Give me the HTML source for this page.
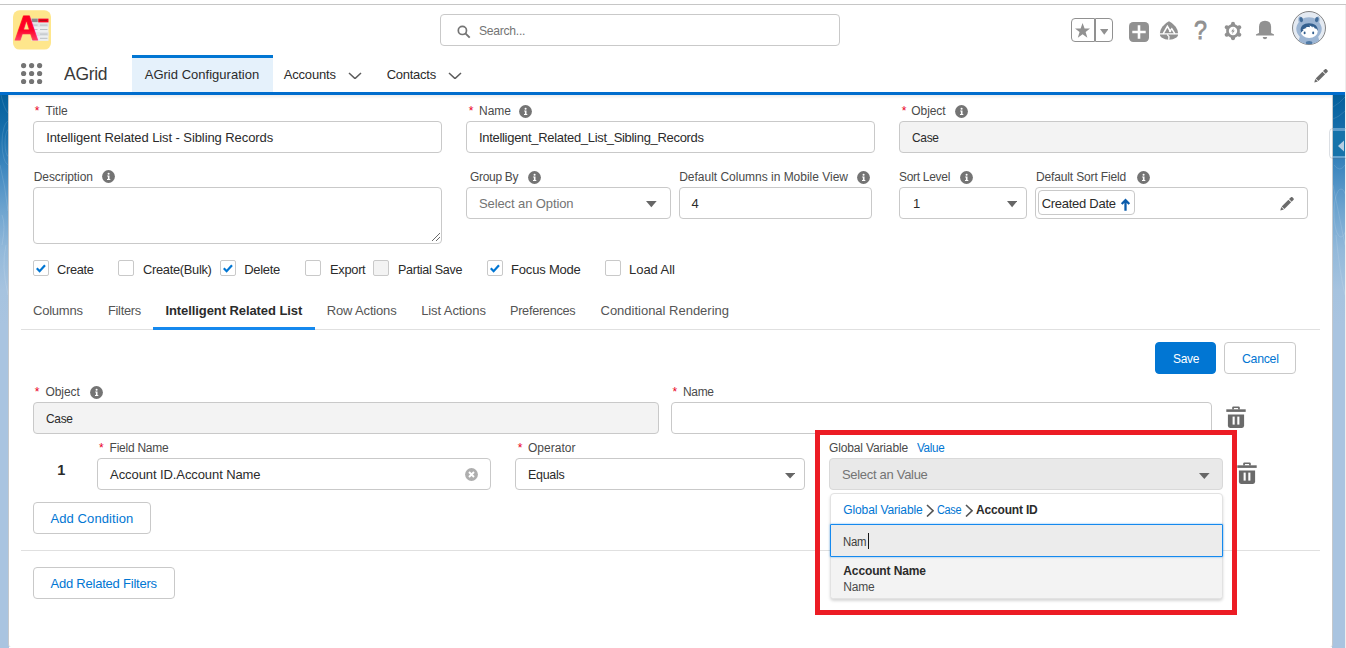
<!DOCTYPE html>
<html lang="en"><head><meta charset="utf-8"><title>AGrid Configuration</title>
<style>
html,body{margin:0;padding:0}
body{width:1346px;height:648px;overflow:hidden;position:relative;background:#fff;font-family:"Liberation Sans",sans-serif}
.b{position:absolute;display:block}
div.b{box-sizing:content-box}
.t{position:absolute;white-space:pre;line-height:1}
</style></head>
<body>
<div class="b" style="left:0px;top:4px;width:1346px;height:1px;background:#c6c6c6;"></div>
<div class="b" style="left:1345px;top:5px;width:1px;height:643px;background:#efeded;"></div>
<div class="b" style="left:0px;top:95px;width:9px;height:553px;background:linear-gradient(to bottom,#035f9c 0px,#1a70ac 40px,#4189c0 75px,#6ea4cf 115px,#93b9da 155px,#a6c3df 195px,#a9c4e0 230px,#a9c4e0 100%);"></div>
<div class="b" style="left:1332px;top:95px;width:13px;height:553px;background:linear-gradient(to bottom,#035f9c 0px,#1a70ac 40px,#4189c0 75px,#6ea4cf 115px,#93b9da 155px,#a6c3df 195px,#a9c4e0 230px,#a9c4e0 100%);"></div>
<svg class="b" style="left:0;top:95px" width="8" height="240" viewBox="0 0 8 240"><g fill="none" stroke="#fff" stroke-opacity=".16" stroke-width=".8"><ellipse cx="9" cy="48" rx="7" ry="22"/><ellipse cx="9" cy="48" rx="4" ry="14"/><path d="M1 0q3 14 7 18M0 70q5 20 8 46M2 120q4 10 0 30M6 150q-5 20 2 50"/></g></svg>
<svg class="b" style="left:1333px;top:95px" width="12" height="240" viewBox="0 0 12 240"><g fill="none" stroke="#fff" stroke-opacity=".16" stroke-width=".8"><path d="M0 12q7-4 12-10M0 24q6-2 12-8M1 70q6 8 11 0M0 90q6 30 12 60M3 140q4 40 9 60"/><ellipse cx="8" cy="118" rx="7" ry="24"/></g></svg>
<div class="b" style="left:8px;top:95px;width:1324.5px;height:551.5px;background:#fff;border-left:1px solid #c4c8cc;border-right:1px solid #c4c8cc;border-radius:0 0 3px 3px;box-sizing:border-box;"></div>
<div class="b" style="left:9px;top:95px;width:1323px;height:4px;background:linear-gradient(to bottom,rgba(0,0,0,.07),rgba(0,0,0,0));"></div>
<div class="b" style="left:0px;top:92px;width:1345px;height:3px;background:#016dcd;"></div>
<div class="b" style="left:1329px;top:127.500px;width:20px;height:31px;border:1px solid rgba(90,110,130,.22);border-radius:4px;box-sizing:border-box"></div>
<div class="b" style="left:1333px;top:128px;width:12px;height:30px;background:rgba(120,175,215,.75);"></div>
<div class="b" style="left:1333px;top:130.5px;width:12px;height:25.5px;background:#1673aa;"></div>
<svg class="b" style="left:1337.500px;top:139.500px" width="6.500" height="12" viewBox="0 0 6.500 12"><path d="M6.500 0v12L0 6z" fill="#b4cee2"/></svg>
<svg class="b" style="left:13px;top:10px" width="38" height="40" viewBox="0 0 38 40">
<defs><linearGradient id="ag" x1="0" y1="0" x2="0" y2="1"><stop offset="0" stop-color="#ff0018"/><stop offset=".55" stop-color="#ff0028"/><stop offset="1" stop-color="#ff6a88"/></linearGradient></defs>
<rect x="0" y=".3" width="38" height="39.3" rx="6.5" fill="#fee68c"/>
<rect x="18.5" y="8.6" width="17" height="22.3" fill="#eceef0"/>
<rect x="18.5" y="8.6" width="6.3" height="3.6" fill="#8a8a8a"/><rect x="25.2" y="8.6" width="10.3" height="3.8" fill="#f5001c"/>
<rect x="26.5" y="10" width="7.5" height="1" fill="#a8101c"/>
<rect x="18.5" y="13.2" width="17" height="3.6" fill="#dfe2e5"/><rect x="18.5" y="22.2" width="17" height="3.8" fill="#dfe2e5"/>
<g fill="#b9bec3"><rect x="20" y="14.6" width="4.6" height="1"/><rect x="27" y="14.6" width="7.5" height="1"/><rect x="27" y="19" width="7.5" height="1"/><rect x="27" y="23.6" width="7.5" height="1"/><rect x="27" y="27.8" width="7.5" height="1"/><rect x="21" y="19" width="3.5" height="1"/></g>
<text x="1.6" y="30.3" font-family="Liberation Sans, sans-serif" font-weight="700" font-size="35" fill="url(#ag)" textLength="24" lengthAdjust="spacingAndGlyphs" stroke="url(#ag)" stroke-width="1">A</text>
</svg>
<div class="b" style="left:440px;top:14px;width:398px;height:30px;background:#fff;border:1px solid #c9c9c9;border-radius:4px;"></div>
<svg class="b" style="left:457px;top:25px" width="14" height="14" viewBox="0 0 14 14"><circle cx="5.4" cy="5.4" r="4.1" fill="none" stroke="#747474" stroke-width="1.7"/><path d="M8.4 8.4l4.3 4.3" stroke="#747474" stroke-width="1.9"/></svg>
<div class="b" style="left:1071px;top:18px;width:24px;height:24px;border:1px solid #919191;border-radius:4px 0 0 4px;box-sizing:border-box"></div>
<div class="b" style="left:1095px;top:18px;width:18px;height:24px;border:1px solid #919191;border-radius:0 4px 4px 0;box-sizing:border-box"></div>
<svg class="b" style="left:1075.3px;top:23.3px" width="15.2" height="15.2" viewBox="0 0 20 20"><path d="M10 0l2.6 7.2H20l-6 4.6 2.3 7.6-6.3-4.6-6.3 4.6L6 11.800 0 7.200h7.400z" fill="#919191"/></svg>
<svg class="b" style="left:1099.9px;top:29.1px" width="8.5" height="5.7" viewBox="0 0 10 6" preserveAspectRatio="none"><path d="M0 0h10L5 6z" fill="#919191"/></svg>
<svg class="b" style="left:1129px;top:22px" width="20" height="20" viewBox="0 0 20 20"><rect width="20" height="20" rx="4.2" fill="#919191"/><path d="M8.700 3.300h2.600v5.400h5.400v2.600h-5.400v5.400H8.700v-5.400H3.300V8.700h5.400z" fill="#fff"/></svg>
<svg class="b" style="left:1159px;top:20.500px" width="20" height="19" viewBox="0 0 20 19"><path d="M.9 12.300Q.9 9.300 3.300 5.800 6.200 1.900 10 .3 13.800 1.900 16.700 5.800 19.100 9.300 19.100 12.300z" fill="#919191"/>
<path d="M.9 13.600H19.100Q19.300 15.300 17.500 16.400 14 18.600 10 18.700 6 18.600 2.500 16.400 .7 15.300 .9 13.600z" fill="#919191"/>
<path d="M4.100 12.800L8.400 5.300 11.700 11M10.300 10.900L12.800 7.700 15.900 12.800" fill="none" stroke="#fff" stroke-width="1.500"/>
<path d="M8.100 13.400l1.900 2.200-.3 3.300" stroke="#fff" stroke-width="1.300" fill="none"/></svg>
<span class="t" style="left:1194.200px;top:17.800px;font-size:25px;font-weight:400;color:#919191;-webkit-text-stroke:.8px #919191;transform:scaleX(.93);transform-origin:0 0">?</span>
<svg class="b" style="left:1222.900px;top:20.900px" width="20" height="20" viewBox="-10 -10 20 20"><g stroke="#919191" stroke-width="4" stroke-linecap="round"><line x1="0" y1="-7.300" x2="0" y2="7.300" transform="rotate(0)"/><line x1="0" y1="-7.300" x2="0" y2="7.300" transform="rotate(60)"/><line x1="0" y1="-7.300" x2="0" y2="7.300" transform="rotate(120)"/></g><circle r="6.900" fill="#919191"/><circle r="4.200" fill="#fff"/><path d="M.9 -2.900L-1.900 .6h1.700l-.9 2.600 2.900-3.700H.1z" fill="#919191"/></svg>
<svg class="b" style="left:1255px;top:20px" width="20" height="20" viewBox="0 0 20 20"><path d="M4 13V6.800Q4 .7 10 .7Q16.100 .7 16.100 6.800V13l2.600 1.200Q19.100 14.400 19.100 14.900q0 .6-.6 .6H1.500q-.6 0-.6-.6 0-.5 .4-.7z" fill="#919191"/><path d="M7.700 17h4.500q-.3 2.200-2.250 2.200T7.700 17z" fill="#919191"/></svg>
<svg class="b" style="left:1292px;top:11px" width="34" height="34" viewBox="0 0 34 34"><defs><clipPath id="ac"><circle cx="17" cy="17" r="16.200"/></clipPath></defs>
<circle cx="17" cy="17" r="16.500" fill="#e4eaf2" stroke="#777" stroke-width=".9"/>
<g clip-path="url(#ac)">
<path d="M17 6.300c3 0 5.300.8 7.100 2.100 1.600 1.300 4.200 3.100 5.400 7.600.9 4-1 7.300-3.300 9.700l2.600 9.300H5.200l2.600-9.300C5.500 23.300 3.600 20 4.500 16c1.200-4.500 3.800-6.300 5.400-7.600C11.700 7.100 14 6.300 17 6.300z" fill="#9cb5d3"/>
<path d="M6.800 11.500c-.9-2.800-.5-5.200.6-6.300 1.800.4 3.700 1.800 4.800 3.700-2.100.5-4 1.400-5.400 2.600zM27.200 11.500c.9-2.800.5-5.200-.6-6.300-1.800.4-3.700 1.800-4.800 3.700 2.100.5 4 1.400 5.400 2.600z" fill="#9cb5d3"/>
<ellipse cx="9.200" cy="8.600" rx="1.700" ry="2.600" transform="rotate(-18 9.200 8.600)" fill="#426d9a"/><ellipse cx="24.800" cy="8.600" rx="1.700" ry="2.600" transform="rotate(18 24.800 8.600)" fill="#426d9a"/>
<ellipse cx="17.200" cy="20.400" rx="8.500" ry="6.600" fill="#fff"/>
<path d="M8.700 19.800c-.6-4.700 2.900-7.600 8.300-7.600 5.600 0 9.300 2.900 8.700 7.600-.6-1.100-1.300-2-2-2.700l-.4 1.200c-.6-1.200-1.400-2.200-2.500-3l-.3 1.300c-.8-.9-1.800-1.600-3-2l.6 1.700c-1.500-.5-3-.5-4.500-.1l1.300.9c-1.800.3-3.200 1-4.400 2l1.200.2c-1.200.7-2.200 1.600-2.900 2.700z" fill="#34608f"/>
<ellipse cx="12.600" cy="21.900" rx="1" ry="1.400" fill="#34608f"/><ellipse cx="21.200" cy="21.900" rx="1" ry="1.400" fill="#34608f"/>
<ellipse cx="17.100" cy="31.800" rx="3.300" ry="1.900" fill="#4f7aa6"/>
</g></svg>
<svg class="b" style="left:0;top:0" width="60" height="92" viewBox="0 0 60 92"><g fill="#747474"><circle cx="23.6" cy="65.6" r="2.600"/><circle cx="23.6" cy="73.5" r="2.600"/><circle cx="23.6" cy="81.5" r="2.600"/><circle cx="31.6" cy="65.6" r="2.600"/><circle cx="31.6" cy="73.5" r="2.600"/><circle cx="31.6" cy="81.5" r="2.600"/><circle cx="39.6" cy="65.6" r="2.600"/><circle cx="39.6" cy="73.5" r="2.600"/><circle cx="39.6" cy="81.5" r="2.600"/></g></svg>
<div class="b" style="left:132px;top:55px;width:141px;height:37px;background:#e5f1fb;border-top:3px solid #0176d3;box-sizing:border-box;"></div>
<svg class="b" style="left:348.3px;top:71.7px" width="14.0" height="7.6"><path d="M1 1L7.00 6.60L13.00 1" fill="none" stroke="#5c5c5c" stroke-width="1.5"/></svg>
<svg class="b" style="left:448.0px;top:71.7px" width="14.0" height="7.6"><path d="M1 1L7.00 6.60L13.00 1" fill="none" stroke="#5c5c5c" stroke-width="1.5"/></svg>
<svg class="b" style="left:1314px;top:69px" width="14" height="14" viewBox="0 0 14 14"><g transform="translate(.3 13.500) rotate(-45)" fill="#6b6b6b"><path d="M0 0L3.200 -1.900V1.900z"/><rect x="3.900" y="-1.900" width="9.500" height="3.800"/><path d="M14.200 -1.900h2.400q1.400 0 1.400 1.400v1q0 1.400-1.400 1.400h-2.400z"/></g></svg>
<div class="b" style="left:33px;top:121px;width:407px;height:30px;background:#fff;border:1px solid #c9c9c9;border-radius:4px;"></div>
<div class="b" style="left:466px;top:121px;width:407px;height:30px;background:#fff;border:1px solid #c9c9c9;border-radius:4px;"></div>
<div class="b" style="left:899px;top:121px;width:407px;height:30px;background:#f3f3f3;border:1px solid #c9c9c9;border-radius:4px;"></div>
<div class="b" style="left:33px;top:187px;width:407px;height:55px;background:#fff;border:1px solid #c9c9c9;border-radius:4px;"></div>
<svg class="b" style="left:431px;top:232px" width="10" height="10"><path d="M9 1L1 9M9 5L5 9" stroke="#6a6a6a" stroke-width="1"/></svg>
<div class="b" style="left:466px;top:187px;width:203px;height:30px;background:#fff;border:1px solid #c9c9c9;border-radius:4px;"></div>
<div class="b" style="left:679px;top:187px;width:191px;height:30px;background:#fff;border:1px solid #c9c9c9;border-radius:4px;"></div>
<div class="b" style="left:899px;top:187px;width:126px;height:30px;background:#fff;border:1px solid #c9c9c9;border-radius:4px;"></div>
<div class="b" style="left:1035px;top:187px;width:271px;height:30px;background:#fff;border:1px solid #c9c9c9;border-radius:4px;"></div>
<div class="b" style="left:1038px;top:190px;width:95px;height:23px;background:#fff;border:1px solid #c9c9c9;border-radius:4px;"></div>
<svg class="b" style="left:519.4px;top:104.5px" width="13" height="13" viewBox="0 0 13 13"><circle cx="6.5" cy="6.5" r="6.4" fill="#747474"/><circle cx="6.6" cy="3.7" r="1.05" fill="#fff"/><path d="M5.2 5.5h2.3v3.6h.8v1H5v-1h.9V6.5h-.7z" fill="#fff"/></svg>
<svg class="b" style="left:955.3px;top:104.5px" width="13" height="13" viewBox="0 0 13 13"><circle cx="6.5" cy="6.5" r="6.4" fill="#747474"/><circle cx="6.6" cy="3.7" r="1.05" fill="#fff"/><path d="M5.2 5.5h2.3v3.6h.8v1H5v-1h.9V6.5h-.7z" fill="#fff"/></svg>
<svg class="b" style="left:102.3px;top:170.4px" width="13" height="13" viewBox="0 0 13 13"><circle cx="6.5" cy="6.5" r="6.4" fill="#747474"/><circle cx="6.6" cy="3.7" r="1.05" fill="#fff"/><path d="M5.2 5.5h2.3v3.6h.8v1H5v-1h.9V6.5h-.7z" fill="#fff"/></svg>
<svg class="b" style="left:528.2px;top:170.5px" width="13" height="13" viewBox="0 0 13 13"><circle cx="6.5" cy="6.5" r="6.4" fill="#747474"/><circle cx="6.6" cy="3.7" r="1.05" fill="#fff"/><path d="M5.2 5.5h2.3v3.6h.8v1H5v-1h.9V6.5h-.7z" fill="#fff"/></svg>
<svg class="b" style="left:857.0px;top:170.5px" width="13" height="13" viewBox="0 0 13 13"><circle cx="6.5" cy="6.5" r="6.4" fill="#747474"/><circle cx="6.6" cy="3.7" r="1.05" fill="#fff"/><path d="M5.2 5.5h2.3v3.6h.8v1H5v-1h.9V6.5h-.7z" fill="#fff"/></svg>
<svg class="b" style="left:960.1px;top:170.5px" width="13" height="13" viewBox="0 0 13 13"><circle cx="6.5" cy="6.5" r="6.4" fill="#747474"/><circle cx="6.6" cy="3.7" r="1.05" fill="#fff"/><path d="M5.2 5.5h2.3v3.6h.8v1H5v-1h.9V6.5h-.7z" fill="#fff"/></svg>
<svg class="b" style="left:1136.5px;top:170.5px" width="13" height="13" viewBox="0 0 13 13"><circle cx="6.5" cy="6.5" r="6.4" fill="#747474"/><circle cx="6.6" cy="3.7" r="1.05" fill="#fff"/><path d="M5.2 5.5h2.3v3.6h.8v1H5v-1h.9V6.5h-.7z" fill="#fff"/></svg>
<svg class="b" style="left:89.5px;top:385.5px" width="13" height="13" viewBox="0 0 13 13"><circle cx="6.5" cy="6.5" r="6.4" fill="#747474"/><circle cx="6.6" cy="3.7" r="1.05" fill="#fff"/><path d="M5.2 5.5h2.3v3.6h.8v1H5v-1h.9V6.5h-.7z" fill="#fff"/></svg>
<svg class="b" style="left:646.3px;top:201.4px" width="10.7" height="6.3" viewBox="0 0 10 6" preserveAspectRatio="none"><path d="M0 0h10L5 6z" fill="#666"/></svg>
<svg class="b" style="left:1007.0px;top:201.4px" width="10.2" height="6.3" viewBox="0 0 10 6" preserveAspectRatio="none"><path d="M0 0h10L5 6z" fill="#666"/></svg>
<svg class="b" style="left:1120px;top:198px" width="11" height="14" viewBox="0 0 11 14"><path d="M5.500 1.800v11M1.700 6L5.500 2.200 9.300 6" fill="none" stroke="#0b5cab" stroke-width="2.300"/></svg>
<svg class="b" style="left:1280px;top:197px" width="14" height="14" viewBox="0 0 14 14"><g transform="translate(.3 13.500) rotate(-45)" fill="#6b6b6b"><path d="M0 0L3.200 -1.900V1.900z"/><rect x="3.900" y="-1.900" width="9.500" height="3.800"/><path d="M14.200 -1.900h2.400q1.400 0 1.400 1.400v1q0 1.400-1.400 1.400h-2.400z"/></g></svg>
<div class="b" style="left:33px;top:260px;width:16px;height:16px;background:#fff;border:1px solid #c9c9c9;border-radius:2px;box-sizing:border-box"></div><svg class="b" style="left:33px;top:260px" width="16" height="16" viewBox="0 0 16 16"><path d="M3.800 8.300l2.800 2.900 5.400-6" fill="none" stroke="#0176d3" stroke-width="2.200"/></svg>
<div class="b" style="left:118px;top:260px;width:16px;height:16px;background:#fff;border:1px solid #c9c9c9;border-radius:2px;box-sizing:border-box"></div>
<div class="b" style="left:220px;top:260px;width:16px;height:16px;background:#fff;border:1px solid #c9c9c9;border-radius:2px;box-sizing:border-box"></div><svg class="b" style="left:220px;top:260px" width="16" height="16" viewBox="0 0 16 16"><path d="M3.800 8.300l2.800 2.900 5.400-6" fill="none" stroke="#0176d3" stroke-width="2.200"/></svg>
<div class="b" style="left:305px;top:260px;width:16px;height:16px;background:#fff;border:1px solid #c9c9c9;border-radius:2px;box-sizing:border-box"></div>
<div class="b" style="left:373px;top:260px;width:16px;height:16px;background:#f3f3f3;border:1px solid #c9c9c9;border-radius:2px;box-sizing:border-box"></div>
<div class="b" style="left:487px;top:260px;width:16px;height:16px;background:#fff;border:1px solid #c9c9c9;border-radius:2px;box-sizing:border-box"></div><svg class="b" style="left:487px;top:260px" width="16" height="16" viewBox="0 0 16 16"><path d="M3.800 8.300l2.800 2.900 5.400-6" fill="none" stroke="#0176d3" stroke-width="2.200"/></svg>
<div class="b" style="left:605px;top:260px;width:16px;height:16px;background:#fff;border:1px solid #c9c9c9;border-radius:2px;box-sizing:border-box"></div>
<div class="b" style="left:21px;top:329px;width:1299px;height:1px;background:#e0e0e0;"></div>
<div class="b" style="left:153px;top:327px;width:162px;height:3px;background:#1589ee;"></div>
<div class="b" style="left:1155px;top:342px;width:59px;height:30px;background:#0176d3;border:1px solid #0176d3;border-radius:4px;"></div>
<div class="b" style="left:1224px;top:342px;width:70px;height:30px;background:#fff;border:1px solid #c9c9c9;border-radius:4px;"></div>
<div class="b" style="left:33px;top:402px;width:624px;height:30px;background:#f3f3f3;border:1px solid #c9c9c9;border-radius:4px;"></div>
<div class="b" style="left:671px;top:402px;width:539px;height:30px;background:#fff;border:1px solid #c9c9c9;border-radius:4px;"></div>
<svg class="b" style="left:1226.3px;top:406px" width="20" height="22" viewBox="0 0 20 22"><path d="M0.3 3.3h19.4v2.6H0.3z" fill="#6a6a6a"/><path d="M6.2 3.4V1.6Q6.2 0.4 7.4 0.4h5.2Q13.8 0.4 13.8 1.6V3.4h-1.7V2H7.9v1.4z" fill="#6a6a6a"/><path d="M1.900 8.500h16.200v11.300q0 2.100-2.100 2.100H4q-2.100 0-2.100-2.100z" fill="#6a6a6a"/><rect x="6.6" y="10.6" width="2.1" height="8" fill="#fff"/><rect x="11.3" y="10.6" width="2.1" height="8" fill="#fff"/></svg>
<div class="b" style="left:97px;top:458px;width:392px;height:30px;background:#fff;border:1px solid #c9c9c9;border-radius:4px;"></div>
<svg class="b" style="left:465.300px;top:467.500px" width="13" height="13" viewBox="0 0 13 13"><circle cx="6.500" cy="6.500" r="6.400" fill="#aeaeae"/><path d="M4 4l5 5M9 4L4 9" stroke="#fff" stroke-width="1.900"/></svg>
<div class="b" style="left:515px;top:458px;width:288px;height:30px;background:#fff;border:1px solid #c9c9c9;border-radius:4px;"></div>
<svg class="b" style="left:785.3px;top:473.0px" width="10.2" height="5.6" viewBox="0 0 10 6" preserveAspectRatio="none"><path d="M0 0h10L5 6z" fill="#666"/></svg>
<div class="b" style="left:829px;top:458px;width:392px;height:30px;background:#e9e9e9;border:1px solid #d9d9d9;border-radius:4px;"></div>
<svg class="b" style="left:1199.3px;top:472.5px" width="10.6" height="6.0" viewBox="0 0 10 6" preserveAspectRatio="none"><path d="M0 0h10L5 6z" fill="#666"/></svg>
<svg class="b" style="left:1237.1px;top:462px" width="20" height="22" viewBox="0 0 20 22"><path d="M0.3 3.3h19.4v2.6H0.3z" fill="#6a6a6a"/><path d="M6.2 3.4V1.6Q6.2 0.4 7.4 0.4h5.2Q13.8 0.4 13.8 1.6V3.4h-1.7V2H7.9v1.4z" fill="#6a6a6a"/><path d="M1.900 8.500h16.200v11.300q0 2.100-2.100 2.100H4q-2.100 0-2.100-2.100z" fill="#6a6a6a"/><rect x="6.6" y="10.6" width="2.1" height="8" fill="#fff"/><rect x="11.3" y="10.6" width="2.1" height="8" fill="#fff"/></svg>
<div class="b" style="left:21px;top:550px;width:1299px;height:1px;background:#e0e0e0;"></div>
<div class="b" style="left:33px;top:502px;width:116px;height:30px;background:#fff;border:1px solid #c9c9c9;border-radius:4px;"></div>
<div class="b" style="left:33px;top:567px;width:140px;height:30px;background:#fff;border:1px solid #c9c9c9;border-radius:4px;"></div>
<div class="b" style="left:830px;top:493px;width:392.500px;height:105.500px;background:#fff;border:1px solid #e2e2e2;border-radius:4px;box-shadow:0 2px 3px rgba(0,0,0,.16);box-sizing:border-box"></div>
<div class="b" style="left:831px;top:557px;width:390.5px;height:40.5px;background:#f3f3f3;border-radius:0 0 3px 3px;"></div>
<div class="b" style="left:830px;top:524px;width:392.500px;height:33px;background:#ececec;border:1px solid #1589ee;border-radius:1px;box-shadow:0 0 2px rgba(21,137,238,.7);box-sizing:border-box"></div>
<div class="b" style="left:868px;top:533px;width:1.3px;height:15.5px;background:#181818;"></div>
<svg class="b" style="left:926.0px;top:503.8px" width="8.0" height="13.5"><path d="M1 1L7.00 6.75L1 12.5" fill="none" stroke="#555" stroke-width="1.600"/></svg>
<svg class="b" style="left:965.0px;top:503.8px" width="8.0" height="13.5"><path d="M1 1L7.00 6.75L1 12.5" fill="none" stroke="#555" stroke-width="1.600"/></svg>
<div class="b" style="left:815px;top:430px;width:422px;height:185px;border:5px solid #ec1c24;box-sizing:border-box"></div>
<span class="t" style="left:478.7px;top:23.5px;font-size:13px;color:#747474;letter-spacing:-0.300px;transform:scaleX(0.9349);transform-origin:0 0;">Search...</span>
<span class="t" style="left:64.4px;top:65.0px;font-size:18px;color:#3a3a3a;letter-spacing:-0.300px;transform:scaleX(0.9729);transform-origin:0 0;">AGrid</span>
<span class="t" style="left:144.7px;top:67.6px;font-size:13px;color:#2b2b2b;letter-spacing:0.018px;">AGrid Configuration</span>
<span class="t" style="left:283.8px;top:67.6px;font-size:13px;color:#2b2b2b;letter-spacing:-0.198px;">Accounts</span>
<span class="t" style="left:386.7px;top:67.6px;font-size:13px;color:#2b2b2b;letter-spacing:-0.259px;">Contacts</span>
<span class="t" style="left:34.8px;top:104.7px;font-size:12px;color:#ea001e;">*</span>
<span class="t" style="left:45.5px;top:104.7px;font-size:12px;color:#4a4a4a;">Title</span>
<span class="t" style="left:468.8px;top:104.7px;font-size:12px;color:#ea001e;">*</span>
<span class="t" style="left:479.0px;top:104.7px;font-size:12px;color:#4a4a4a;">Name</span>
<span class="t" style="left:901.7px;top:104.7px;font-size:12px;color:#ea001e;">*</span>
<span class="t" style="left:911.3px;top:104.7px;font-size:12px;color:#4a4a4a;letter-spacing:-0.077px;">Object</span>
<span class="t" style="left:46.2px;top:130.8px;font-size:13px;color:#2b2b2b;letter-spacing:-0.086px;">Intelligent Related List - Sibling Records</span>
<span class="t" style="left:479.0px;top:130.8px;font-size:13px;color:#2b2b2b;letter-spacing:-0.300px;transform:scaleX(0.9985);transform-origin:0 0;">Intelligent_Related_List_Sibling_Records</span>
<span class="t" style="left:912.0px;top:130.8px;font-size:13px;color:#2b2b2b;letter-spacing:-0.300px;transform:scaleX(0.9165);transform-origin:0 0;">Case</span>
<span class="t" style="left:33.8px;top:170.8px;font-size:12px;color:#4a4a4a;letter-spacing:-0.093px;">Description</span>
<span class="t" style="left:470.3px;top:170.8px;font-size:12px;color:#4a4a4a;letter-spacing:-0.300px;transform:scaleX(0.9979);transform-origin:0 0;">Group By</span>
<span class="t" style="left:679.2px;top:170.8px;font-size:12px;color:#4a4a4a;letter-spacing:-0.014px;">Default Columns in Mobile View</span>
<span class="t" style="left:899.1px;top:170.8px;font-size:12px;color:#4a4a4a;letter-spacing:-0.300px;transform:scaleX(0.9994);transform-origin:0 0;">Sort Level</span>
<span class="t" style="left:1035.9px;top:170.8px;font-size:12px;color:#4a4a4a;letter-spacing:-0.136px;">Default Sort Field</span>
<span class="t" style="left:479.0px;top:197.3px;font-size:13px;color:#747474;letter-spacing:-0.102px;">Select an Option</span>
<span class="t" style="left:691.6px;top:197.3px;font-size:13px;color:#2b2b2b;">4</span>
<span class="t" style="left:913.0px;top:197.3px;font-size:13px;color:#2b2b2b;">1</span>
<span class="t" style="left:1041.7px;top:197.3px;font-size:13px;color:#2b2b2b;letter-spacing:-0.275px;">Created Date</span>
<span class="t" style="left:57.3px;top:262.7px;font-size:13px;color:#2b2b2b;letter-spacing:-0.300px;transform:scaleX(0.9832);transform-origin:0 0;">Create</span>
<span class="t" style="left:142.7px;top:262.7px;font-size:13px;color:#2b2b2b;letter-spacing:-0.300px;transform:scaleX(0.9890);transform-origin:0 0;">Create(Bulk)</span>
<span class="t" style="left:244.2px;top:262.7px;font-size:13px;color:#2b2b2b;letter-spacing:-0.296px;">Delete</span>
<span class="t" style="left:329.5px;top:262.7px;font-size:13px;color:#2b2b2b;letter-spacing:-0.300px;transform:scaleX(0.9895);transform-origin:0 0;">Export</span>
<span class="t" style="left:398.0px;top:262.7px;font-size:13px;color:#2b2b2b;letter-spacing:-0.300px;transform:scaleX(0.9642);transform-origin:0 0;">Partial Save</span>
<span class="t" style="left:511.1px;top:262.7px;font-size:13px;color:#2b2b2b;letter-spacing:-0.205px;">Focus Mode</span>
<span class="t" style="left:629.0px;top:262.7px;font-size:13px;color:#2b2b2b;letter-spacing:-0.038px;">Load All</span>
<span class="t" style="left:33.0px;top:304.0px;font-size:13px;color:#555555;letter-spacing:-0.216px;">Columns</span>
<span class="t" style="left:107.6px;top:304.0px;font-size:13px;color:#555555;letter-spacing:-0.300px;transform:scaleX(0.9854);transform-origin:0 0;">Filters</span>
<span class="t" style="left:165.4px;top:304.0px;font-size:13px;font-weight:700;color:#2b2b2b;letter-spacing:-0.078px;">Intelligent Related List</span>
<span class="t" style="left:326.8px;top:304.0px;font-size:13px;color:#555555;letter-spacing:-0.165px;">Row Actions</span>
<span class="t" style="left:421.2px;top:304.0px;font-size:13px;color:#555555;letter-spacing:-0.097px;">List Actions</span>
<span class="t" style="left:510.4px;top:304.0px;font-size:13px;color:#555555;letter-spacing:-0.300px;transform:scaleX(0.9777);transform-origin:0 0;">Preferences</span>
<span class="t" style="left:600.5px;top:304.0px;font-size:13px;color:#555555;letter-spacing:-0.008px;">Conditional Rendering</span>
<span class="t" style="left:1172.6px;top:351.5px;font-size:13px;color:#ffffff;letter-spacing:-0.300px;transform:scaleX(0.9220);transform-origin:0 0;">Save</span>
<span class="t" style="left:1241.6px;top:351.5px;font-size:13px;color:#0176d3;letter-spacing:-0.300px;transform:scaleX(0.9469);transform-origin:0 0;">Cancel</span>
<span class="t" style="left:34.8px;top:385.8px;font-size:12px;color:#ea001e;">*</span>
<span class="t" style="left:45.5px;top:385.8px;font-size:12px;color:#4a4a4a;letter-spacing:-0.078px;">Object</span>
<span class="t" style="left:672.6px;top:385.8px;font-size:12px;color:#ea001e;">*</span>
<span class="t" style="left:683.2px;top:385.8px;font-size:12px;color:#4a4a4a;letter-spacing:-0.300px;transform:scaleX(0.9963);transform-origin:0 0;">Name</span>
<span class="t" style="left:46.2px;top:411.5px;font-size:13px;color:#2b2b2b;letter-spacing:-0.300px;transform:scaleX(0.9165);transform-origin:0 0;">Case</span>
<span class="t" style="left:99.0px;top:442.0px;font-size:12px;color:#ea001e;">*</span>
<span class="t" style="left:109.6px;top:442.0px;font-size:12px;color:#4a4a4a;letter-spacing:-0.251px;">Field Name</span>
<span class="t" style="left:517.8px;top:442.0px;font-size:12px;color:#ea001e;">*</span>
<span class="t" style="left:527.9px;top:442.0px;font-size:12px;color:#4a4a4a;letter-spacing:0.049px;">Operator</span>
<span class="t" style="left:57.3px;top:462.7px;font-size:14.5px;font-weight:700;color:#2b2b2b;">1</span>
<span class="t" style="left:110.1px;top:467.6px;font-size:13px;color:#2b2b2b;letter-spacing:-0.089px;">Account ID.Account Name</span>
<span class="t" style="left:528.4px;top:467.6px;font-size:13px;color:#2b2b2b;letter-spacing:-0.300px;transform:scaleX(0.9569);transform-origin:0 0;">Equals</span>
<span class="t" style="left:829.1px;top:442.2px;font-size:12px;color:#4a4a4a;letter-spacing:-0.155px;">Global Variable</span>
<span class="t" style="left:917.4px;top:442.2px;font-size:12px;color:#0176d3;letter-spacing:-0.300px;transform:scaleX(0.9716);transform-origin:0 0;">Value</span>
<span class="t" style="left:842.4px;top:467.6px;font-size:13px;color:#747474;letter-spacing:-0.300px;transform:scaleX(0.9987);transform-origin:0 0;">Select an Value</span>
<span class="t" style="left:843.3px;top:504.1px;font-size:12px;color:#0176d3;letter-spacing:-0.127px;">Global Variable</span>
<span class="t" style="left:936.9px;top:504.1px;font-size:12px;color:#0176d3;letter-spacing:-0.300px;transform:scaleX(0.9072);transform-origin:0 0;">Case</span>
<span class="t" style="left:976.0px;top:504.1px;font-size:12px;font-weight:700;color:#2b2b2b;letter-spacing:-0.172px;">Account ID</span>
<span class="t" style="left:843.3px;top:535.6px;font-size:12px;color:#3e3e3c;letter-spacing:-0.300px;transform:scaleX(0.9497);transform-origin:0 0;">Nam</span>
<span class="t" style="left:843.3px;top:564.8px;font-size:12px;font-weight:700;color:#2b2b2b;letter-spacing:-0.121px;">Account Name</span>
<span class="t" style="left:843.3px;top:580.7px;font-size:12px;color:#4a4a4a;letter-spacing:-0.172px;">Name</span>
<span class="t" style="left:50.5px;top:511.8px;font-size:13px;color:#0176d3;letter-spacing:0.094px;">Add Condition</span>
<span class="t" style="left:50.5px;top:577.0px;font-size:13px;color:#0176d3;letter-spacing:-0.220px;">Add Related Filters</span>
</body></html>
